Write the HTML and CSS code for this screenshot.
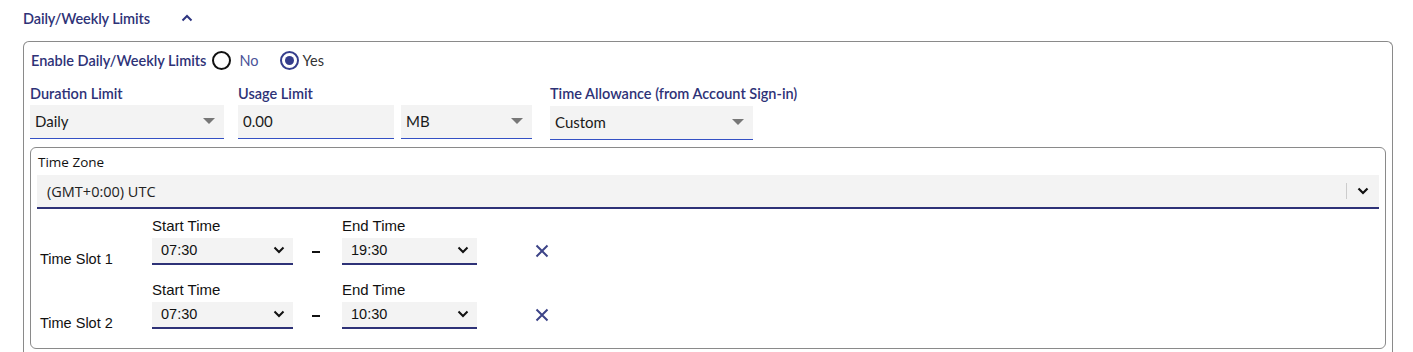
FILE: index.html
```html
<!DOCTYPE html>
<html>
<head>
<meta charset="utf-8">
<link rel="stylesheet" href="styles.css">
</head>
<body>
<div class="page">
  <div class="section-head">
    <span class="section-title">Daily/Weekly Limits</span>
    <svg class="chev-up" width="12" height="8" viewBox="0 0 12 8"><path d="M1.5 6.5 L6 2 L10.5 6.5" fill="none" stroke="#2e3580" stroke-width="2"/></svg>
  </div>
  <div class="outer">
    <div class="enable-row">
      <span class="enable-label">Enable Daily/Weekly Limits</span>
      <span class="radio"></span><span class="radio-text no">No</span>
      <span class="radio checked"><span class="dot"></span></span><span class="radio-text yes">Yes</span>
    </div>
    <div class="fields-row">
      <div class="field w-duration">
        <div class="flabel">Duration Limit</div>
        <div class="finput"><span>Daily</span><span class="tri"></span></div>
      </div>
      <div class="field w-usage">
        <div class="flabel">Usage Limit</div>
        <div class="finput"><span>0.00</span></div>
      </div>
      <div class="field w-unit">
        <div class="flabel">&nbsp;</div>
        <div class="finput"><span>MB</span><span class="tri"></span></div>
      </div>
      <div class="field w-allow">
        <div class="flabel">Time Allowance (from Account Sign-in)</div>
        <div class="finput tall"><span>Custom</span><span class="tri"></span></div>
      </div>
    </div>
    <div class="inner">
      <div class="tz-label">Time Zone</div>
      <div class="tz-select">
        <span>(GMT+0:00) UTC</span>
        <span class="tz-right"><span class="sep"></span>
          <svg width="12" height="8" viewBox="0 0 12 8"><path d="M1.5 1.5 L6 6 L10.5 1.5" fill="none" stroke="#111" stroke-width="2.2"/></svg>
        </span>
      </div>
      <div class="slot first">
        <div class="slot-name">Time Slot 1</div>
        <div class="tfield start">
          <div class="tlabel">Start Time</div>
          <div class="tselect"><span>07:30</span><svg width="12" height="8" viewBox="0 0 12 8"><path d="M1.5 1.5 L6 6 L10.5 1.5" fill="none" stroke="#111" stroke-width="2"/></svg></div>
        </div>
        <div class="dash"></div>
        <div class="tfield end">
          <div class="tlabel">End Time</div>
          <div class="tselect"><span>19:30</span><svg width="12" height="8" viewBox="0 0 12 8"><path d="M1.5 1.5 L6 6 L10.5 1.5" fill="none" stroke="#111" stroke-width="2"/></svg></div>
        </div>
        <svg class="remove" width="14" height="14" viewBox="0 0 14 14"><path d="M1.5 1.5 L12.5 12.5 M12.5 1.5 L1.5 12.5" stroke="#3d4488" stroke-width="2"/></svg>
      </div>
      <div class="slot">
        <div class="slot-name">Time Slot 2</div>
        <div class="tfield start">
          <div class="tlabel">Start Time</div>
          <div class="tselect"><span>07:30</span><svg width="12" height="8" viewBox="0 0 12 8"><path d="M1.5 1.5 L6 6 L10.5 1.5" fill="none" stroke="#111" stroke-width="2"/></svg></div>
        </div>
        <div class="dash"></div>
        <div class="tfield end">
          <div class="tlabel">End Time</div>
          <div class="tselect"><span>10:30</span><svg width="12" height="8" viewBox="0 0 12 8"><path d="M1.5 1.5 L6 6 L10.5 1.5" fill="none" stroke="#111" stroke-width="2"/></svg></div>
        </div>
        <svg class="remove" width="14" height="14" viewBox="0 0 14 14"><path d="M1.5 1.5 L12.5 12.5 M12.5 1.5 L1.5 12.5" stroke="#3d4488" stroke-width="2"/></svg>
      </div>
    </div>
  </div>
</div>
</body>
</html>
```

FILE: styles.css
```css
html, body { margin: 0; padding: 0; background: #fff; }
html { overflow: hidden; }
body { font-family: "Lato", "Open Sans", sans-serif; color: #222; height: 352px; overflow: hidden; }
.page { padding: 0 20px 0 23px; }

.section-head { display: flex; align-items: center; height: 37px; }
.section-title { font-size: 14.5px; font-weight: 600; color: #2e3277; letter-spacing: -0.1px; }
.chev-up { margin-left: 31px; margin-top: -1px; }

.outer {
  margin-top: 4px;
  border: 1px solid #8a8a8a;
  border-bottom: none;
  border-radius: 6px 6px 0 0;
  padding: 0 6px 0 6px;
  height: 311px;
  box-sizing: border-box;
}

.enable-row { display: flex; align-items: center; height: 36px; padding-left: 1px; }
.enable-label { font-size: 14.5px; font-weight: 600; color: #2e3277; margin-right: 6px; white-space: nowrap; }
.radio { width: 15px; height: 15px; border: 2px solid #111; border-radius: 50%; display: inline-flex; align-items: center; justify-content: center; flex: none; }
.radio.checked { border-color: #353d8c; }
.dot { width: 9px; height: 9px; border-radius: 50%; background: #353d8c; }
.radio-text { font-size: 14.5px; margin-left: 8px; }
.radio-text.no { color: #4b5399; margin-right: 21px; }
.radio-text.yes { color: #333; margin-left: 4px; }

.fields-row { display: flex; align-items: flex-start; margin-top: 7px; }
.field { display: flex; flex-direction: column; flex: none; }
.flabel { font-size: 14.5px; font-weight: 600; color: #2e3277; height: 20px; line-height: 18px; white-space: nowrap; }
.finput {
  height: 34px; box-sizing: border-box; background: #f3f3f3;
  border-bottom: 1px solid #3450c4;
  display: flex; align-items: center; justify-content: space-between;
  padding: 0 9px 2px 5px; font-size: 15px; color: #1a1a1a;
}
.finput.tall { height: 34px; margin-top: 1px; padding-left: 5px; }
.tri { width: 0; height: 0; border-left: 6px solid transparent; border-right: 6px solid transparent; border-top: 6px solid #777; }
.w-duration { width: 194px; }
.w-usage { width: 156px; margin-left: 14px; }
.w-unit { width: 131px; margin-left: 7px; }
.w-allow { width: 203px; margin-left: 18px; }

.inner {
  margin-top: 7px;
  border: 1px solid #8a8a8a;
  border-radius: 6px;
  padding: 5px 6px 0 6px;
  height: 202px;
  box-sizing: border-box;
}
.tz-label { font-family: "Open Sans", "Liberation Sans", sans-serif; font-size: 13.5px; color: #111; height: 22px; line-height: 18px; padding-left: 1px; }
.tz-select {
  height: 34px; box-sizing: border-box; background: #f3f3f3;
  border-bottom: 2px solid #2e3277;
  display: flex; align-items: center; justify-content: space-between;
  padding: 0 10px 0 10px;
  font-family: "Open Sans", "Liberation Sans", sans-serif; font-size: 14.5px; color: #222;
}
.tz-right { display: flex; align-items: center; }
.sep { width: 1px; height: 16px; background: #ccc; margin-right: 10px; }

.slot { display: flex; align-items: flex-end; height: 64px; font-family: "Liberation Sans", Arial, sans-serif; }
.slot.first { height: 56px; }
.slot-name { width: 115px; box-sizing: border-box; font-size: 14.5px; color: #111; padding-left: 3px; margin-bottom: -2px; line-height: 16px; }
.tfield { display: flex; flex-direction: column; flex: none; }
.tlabel { font-size: 15px; color: #111; height: 20px; line-height: 16px; }
.tselect {
  height: 27px; box-sizing: border-box; background: #f3f3f3;
  border-bottom: 2px solid #2e3277;
  display: flex; align-items: center; justify-content: space-between;
  padding: 0 8px 1px 9px; font-size: 14.5px; color: #111;
}
.start .tselect { width: 141px; }
.end .tselect { width: 135px; }
.dash { width: 8px; height: 2px; background: #111; margin: 0 22px 12px 19px; flex: none; }
.remove { margin-left: 58px; margin-bottom: 7px; flex: none; }
```
